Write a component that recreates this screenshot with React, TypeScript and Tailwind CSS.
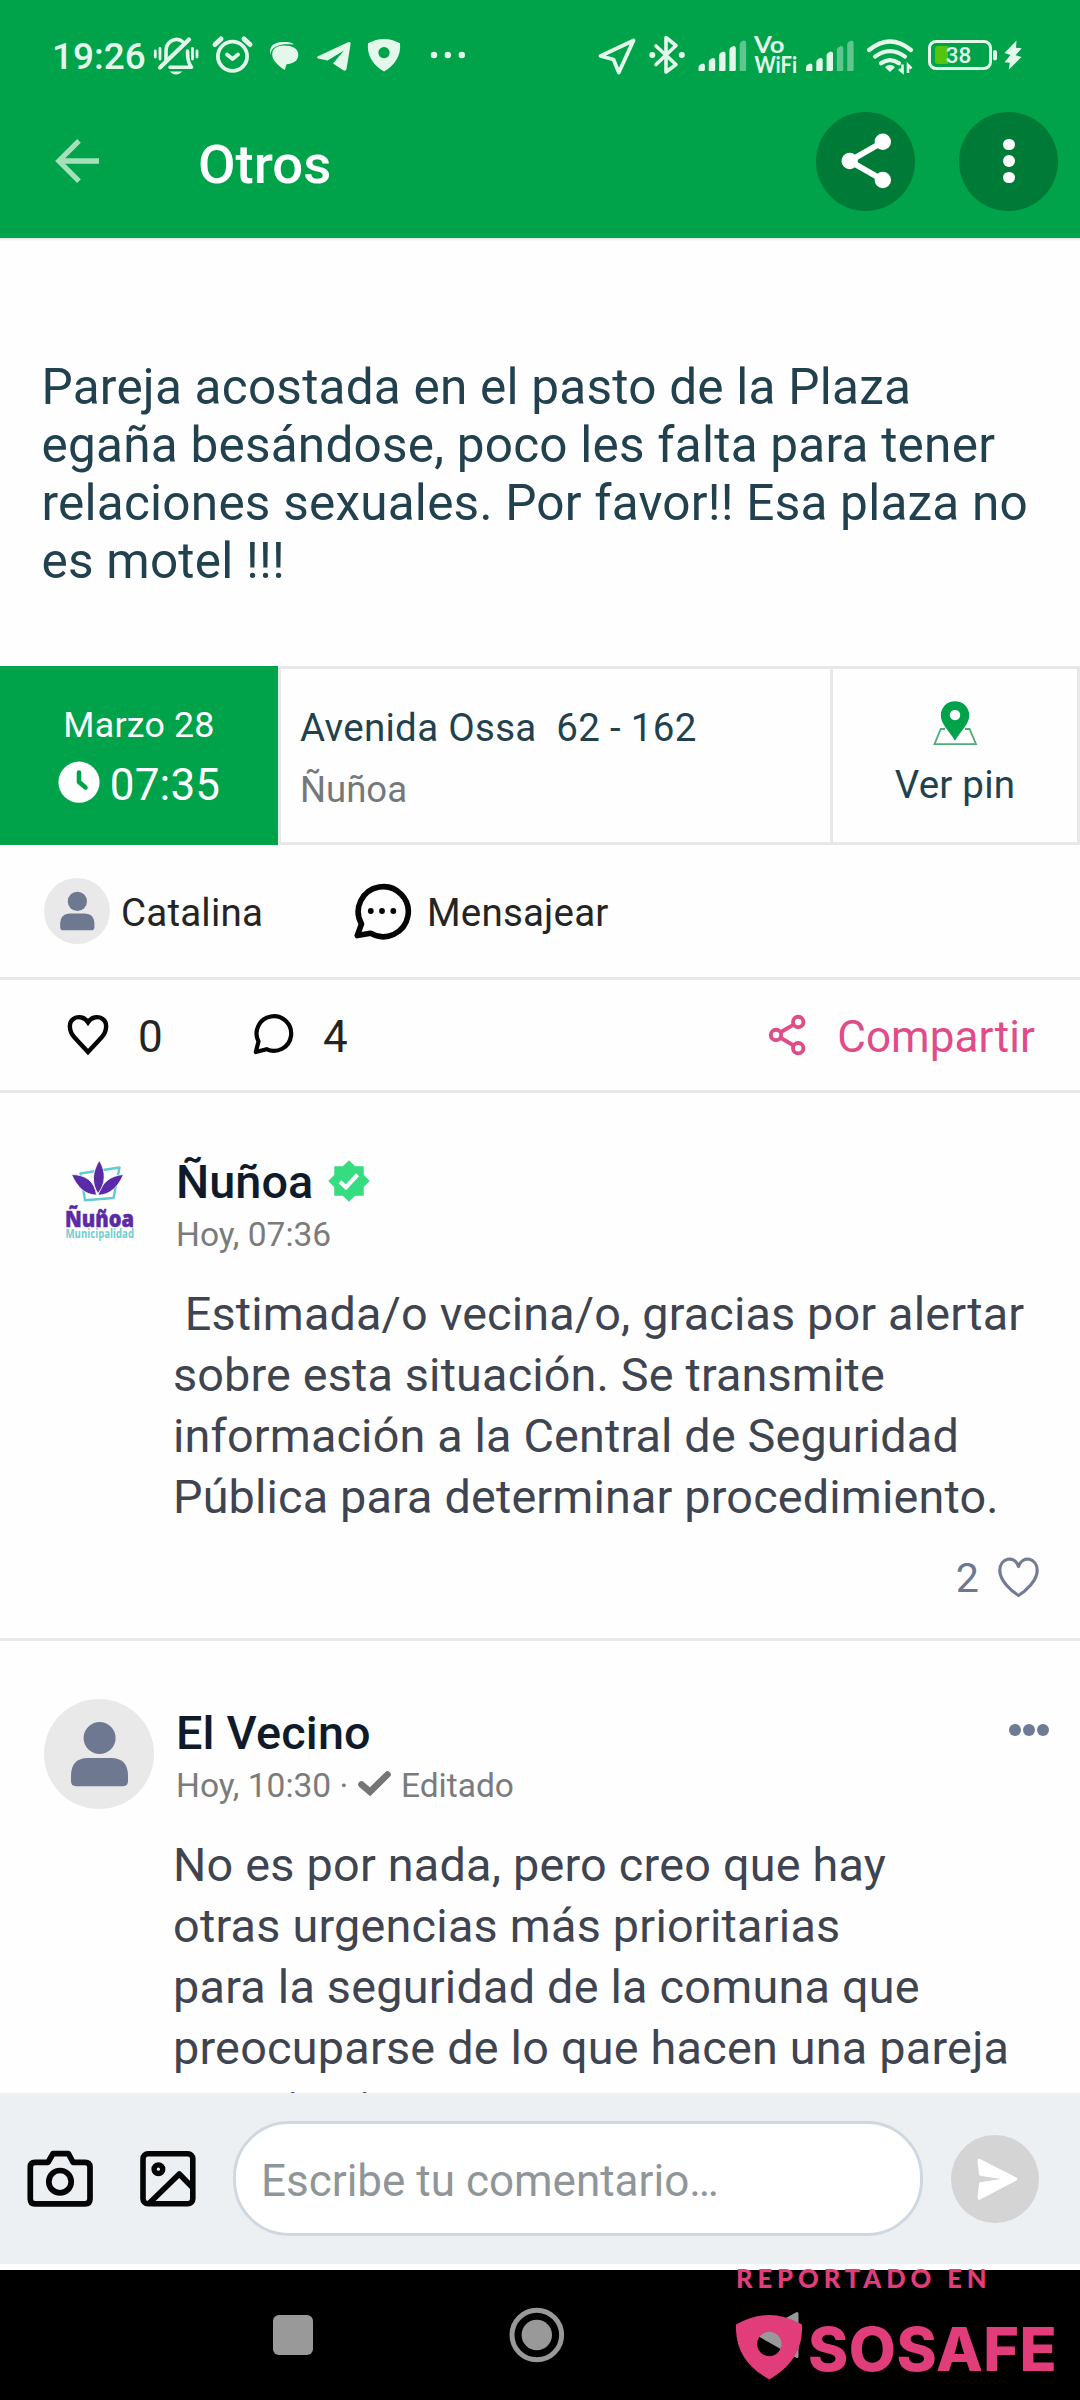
import React, { ReactNode } from "react";

/* Status-bar icons share one coordinate space: x across the bar, y from 30 to 80. */
function Glyph({ x, w, children }: { x: number; w: number; children: ReactNode }) {
  return (
    <svg className="shrink-0" width={w} height={50} viewBox={`${x} 30 ${w} 50`} fill="none">
      {children}
    </svg>
  );
}

const MINT = "#e3f8ea";

function Signal({ x, strong }: { x: number; strong: number }) {
  const tops = [63.5, 58, 51.5, 46, 40.5];
  return (
    <>
      {tops.map((top, i) => (
        <path
          key={i}
          d={`M${x + i * 10.3} 71 V${top + 4} Q${x + i * 10.3} ${top + 2} ${x + i * 10.3 + 2} ${top + 1} L${x + i * 10.3 + 4} ${top} Q${x + i * 10.3 + 6.4} ${top} ${x + i * 10.3 + 6.4} ${top + 2} V69.5 Q${x + i * 10.3 + 6.4} 71 ${x + i * 10.3 + 5} 71Z`}
          fill={MINT}
          opacity={i < strong ? 1 : 0.42}
        />
      ))}
    </>
  );
}

function StatusBar() {
  return (
    <div className="flex h-[100px] pt-[30px]">
      <div className="mt-[5px] ml-[52px] w-[100px] shrink-0 text-[36.9px] leading-[43px] font-medium text-[#e3f8ea]">19:26</div>
      <Glyph x={152} w={56}>
        <g stroke={MINT} strokeWidth="3.6" strokeLinecap="round" strokeLinejoin="round">
          <path d="M166 61 V51 A10.5 11.5 0 0 1 183 42" />
          <path d="M187.5 51 C187.5 60 188.5 63 191.5 67.2 H170" />
          <path d="M160 67.5 L189 39.5" strokeWidth="4.2" />
          <path d="M155.3 51 V57 M160 48.5 V59 M192.5 48.5 V59 M197 51 V57" strokeWidth="2.8" />
        </g>
        <path d="M169.5 71.5 H182.5 Q176 77.5 169.5 71.5Z" fill={MINT} />
      </Glyph>
      <Glyph x={208} w={54}>
        <g stroke={MINT} strokeLinecap="round" strokeLinejoin="round">
          <circle cx="232.5" cy="56.3" r="14.6" strokeWidth="3.8" />
          <path d="M227 54.5 L232.5 59 L238 54.5" strokeWidth="3.8" />
          <path d="M215 44.5 L221 39 M250 44.5 L244 39" strokeWidth="5" />
        </g>
      </Glyph>
      <Glyph x={262} w={46}>
        <path d="M270.5 55 C268 45 276 41.5 284 42 C289 42 292 42.6 294 44.6 C283 43.5 271 44.5 270.5 55Z" fill={MINT} />
        <path d="M284 45.6 C292 45.6 298.3 48.5 298.3 54.8 C298.3 60.5 293.5 63.8 286.5 64.3 L284.8 70 C280 67 272.2 61 272.2 54.5 C272.2 48.5 277 45.6 284 45.6Z" fill={MINT} />
      </Glyph>
      <Glyph x={308} w={52}>
        <path d="M317.5 56.5 L348 42.3 Q351 41.5 350.6 44 L346.5 69 Q345.8 71.5 343.3 70.3 L333 63.5 L344 50.5 L327.5 60.5 L318 58.5 Q316 57.7 317.5 56.5Z" fill={MINT} />
      </Glyph>
      <Glyph x={360} w={58}>
        <path fillRule="evenodd" d="M368 43.3 Q384 34.5 400 43.3 C401.5 56 394 66 384 71.5 C374 66 366.5 56 368 43.3Z M384 47 a5.6 5.6 0 1 0 0.01 0Z" fill={MINT} />
      </Glyph>
      <Glyph x={418} w={60}>
        <g fill={MINT}>
          <circle cx="434" cy="55" r="3.2" />
          <circle cx="447.8" cy="55" r="3.2" />
          <circle cx="461.8" cy="55" r="3.2" />
        </g>
      </Glyph>
      <div className="flex-1" />
      <Glyph x={590} w={52}>
        <path d="M600.5 56 L633.5 40.5 L618.8 72.5 L613.5 59.5Z" stroke={MINT} strokeWidth="3.8" strokeLinejoin="round" />
      </Glyph>
      <Glyph x={642} w={50}>
        <path d="M656 46 L676 64.5 L666 72 V37.5 L676 45.5 L656 64.5" stroke={MINT} strokeWidth="3.6" strokeLinejoin="round" strokeLinecap="round" />
        <circle cx="652.3" cy="55" r="3" fill={MINT} />
        <circle cx="681.8" cy="55" r="3" fill={MINT} />
      </Glyph>
      <Glyph x={692} w={58}>
        <Signal x={698.5} strong={4} />
      </Glyph>
      <Glyph x={750} w={50}>
        <g fill={MINT} fontFamily="Lato" fontWeight="700">
          <text x="754" y="52.5" fontSize="22.5" textLength="30.5" lengthAdjust="spacingAndGlyphs">Vo</text>
          <text x="754.5" y="73.3" fontSize="22" textLength="42.5" lengthAdjust="spacingAndGlyphs">WiFi</text>
        </g>
      </Glyph>
      <Glyph x={800} w={60}>
        <Signal x={806} strong={3} />
      </Glyph>
      <Glyph x={860} w={60}>
        <g stroke={MINT} strokeWidth="4.2" strokeLinecap="round">
          <path d="M869 50 Q890 33 911 50" />
          <path d="M875 56.6 Q890 45.5 905 56.6" />
          <path d="M881 63.2 Q890 57 899 63.2" />
        </g>
        <path d="M890 65 Q894 65 894.8 67.5 L890 72 L885.2 67.5 Q886 65 890 65Z" fill={MINT} />
        <path d="M902.500 64.500 V72 L899 69 M908 73 V65 L911.500 68.500" stroke={MINT} strokeWidth="2.600" />
      </Glyph>
      <Glyph x={920} w={80}>
        <rect x="929.500" y="41.500" width="61" height="27" rx="6.500" stroke={MINT} strokeWidth="3" />
        <path d="M938 46 H948 V64 H938 Q935 64 935 61 V49 Q935 46 938 46Z" fill="#55c40e" />
        <rect x="993" y="50" width="4" height="10.500" rx="2" fill={MINT} />
        <text x="945.800" y="63.300" fontSize="22.500" fontFamily="Roboto" fontWeight="500" fill={MINT}>38</text>
      </Glyph>
      <Glyph x={1000} w={80}>
        <path d="M1016.500 40.500 L1004.500 53 L1010.500 55 L1004.500 62.300 L1009.800 62.800 L1008.800 69.800 L1021.500 57 L1015.500 55.200 L1021.700 48.300 L1016 47.800Z" fill={MINT} />
      </Glyph>
    </div>
  );
}

function Toolbar() {
  return (
    <div className="flex h-[122px] items-center pr-[22px] pl-[52px]">
      <svg width={50} height={50} viewBox="52 136 50 50" fill="none" stroke="#a5e0ba">
        <path d="M99 161 H60" strokeWidth="5.600" />
        <path d="M79 140.800 L58.800 161 L79 181.200" strokeWidth="5.200" />
      </svg>
      <h1 className="ml-[96px] flex-1 pt-[5px] text-[54.500px] leading-[64px] font-medium text-white">Otros</h1>
      <div className="flex size-[99px] items-center justify-center rounded-full bg-[#007a37]">
        <svg width={60} height={60} viewBox="835.500 131 60 60" fill="#fff" stroke="#fff">
          <path d="M882.300 142 L849.200 161 L882.300 180" fill="none" strokeWidth="6" />
          <g stroke="none">
            <circle cx="849.200" cy="161" r="8.200" />
            <circle cx="882.300" cy="141.800" r="8.200" />
            <circle cx="882.300" cy="180" r="8.200" />
          </g>
        </svg>
      </div>
      <div className="ml-[44px] flex size-[99px] flex-col items-center justify-center gap-[5.400px] rounded-full bg-[#007a37] pl-[1px]">
        <span className="size-[11.300px] rounded-full bg-white" />
        <span className="size-[11.300px] rounded-full bg-white" />
        <span className="size-[11.300px] rounded-full bg-white" />
      </div>
    </div>
  );
}

function Person({ size }: { size: number }) {
  return (
    <svg className="shrink-0" width={size} height={size} viewBox="0 0 110 110">
      <circle cx="55" cy="55" r="55" fill="#e9e9ea" />
      <circle cx="55.600" cy="39" r="16" fill="#6f7891" />
      <path d="M44 59 H67 Q84 59 84 77 V82 Q84 87.200 79 87.200 H32 Q27 87.200 27 82 V77 Q27 59 44 59Z" fill="#6f7891" />
    </svg>
  );
}

function MetaRow() {
  return (
    <div className="mt-[76px] flex h-[179px] shrink-0">
      <div className="flex w-[278px] flex-col items-center bg-[#00a34a] pt-[38px] text-white">
        <div className="text-[35.750px] leading-[42px] tracking-[0.200px]">Marzo 28</div>
        <div className="mt-[13px] flex gap-[10px]">
          <svg className="mt-[2px]" width={42} height={42} viewBox="0 0 42 42" fill="none">
            <circle cx="21" cy="21.200" r="20.600" fill="#fff" />
            <path d="M21 11.500 V21 L27.500 26.500" stroke="#00a34a" strokeWidth="4.600" strokeLinecap="round" strokeLinejoin="round" />
          </svg>
          <div className="text-[44px] leading-[52px] tracking-[0.200px]">07:35</div>
        </div>
      </div>
      <div className="w-[555px] border-[3px] border-[#e8e8e9] pt-[36px] pl-[19px]">
        <div className="text-[38.500px] leading-[46px] tracking-[0.300px] whitespace-pre text-[#22414f]">{"Avenida Ossa\u00a0 62 - 162"}</div>
        <div className="mt-[17px] text-[36.500px] leading-[43px] text-[#75787a]">Ñuñoa</div>
      </div>
      <div className="flex flex-1 flex-col items-center border-y-[3px] border-r-[3px] border-[#e8e8e9] pt-[31px]">
        <svg width={48} height={46} viewBox="931 700 48 46" fill="none">
          <path d="M945 729 H940.800 L934.500 744.200 H976 L969.600 729 H965" stroke="#4fae78" strokeWidth="1.800" />
          <path fillRule="evenodd" d="M955 701.300 C963 701.300 969.300 707.500 969.300 715.300 C969.300 724 961 730.500 955 740.800 C949 730.500 940.800 724 940.800 715.300 C940.800 707.500 947 701.300 955 701.300Z M955 709.900 a5.200 5.200 0 1 0 0.010 0Z" fill="#00a34a" />
        </svg>
        <div className="mt-[16px] text-[38.500px] leading-[46px] tracking-[0.200px] text-[#22414f]">Ver pin</div>
      </div>
    </div>
  );
}

function AuthorRow() {
  return (
    <div className="flex h-[135px] shrink-0 items-center border-b-[3px] border-[#e8e8e9] pl-[44px] text-[38.500px] leading-[46px] tracking-[0.200px] text-[#242424]">
      <Person size={66} />
      <div className="ml-[11px] w-[228px] pt-[4px]">Catalina</div>
      <svg width={64} height={60} viewBox="350 881 64 60" fill="none">
        <path d="M362.500 924 A25 25 0 1 1 371.500 933.200 L358.200 935.600Z" stroke="#050505" strokeWidth="5.600" strokeLinejoin="round" />
        <circle cx="371.800" cy="911" r="2.900" fill="#050505" />
        <circle cx="383" cy="911" r="2.900" fill="#050505" />
        <circle cx="394.300" cy="911" r="2.900" fill="#050505" />
      </svg>
      <div className="ml-[14px] pt-[4px]">Mensajear</div>
    </div>
  );
}

function StatsRow() {
  return (
    <div className="flex h-[113px] shrink-0 items-center border-b-[3px] border-[#e8e8e9] pr-[45px] pl-[64px] text-[44px] leading-[52px] text-[#242424]">
      <svg width={48} height={48} viewBox="64 1011 48 48" fill="none">
        <path d="M88 1052 L74.500 1037.500 C68.500 1031 68.500 1022 73.500 1018.800 C78.500 1015.500 85 1017.500 88 1022.200 C91 1017.500 97.500 1015.500 102.500 1018.800 C107.500 1022 107.500 1031 101.500 1037.500Z" stroke="#050505" strokeWidth="4.400" />
      </svg>
      <div className="ml-[26px] w-[110px] pt-[4px]">0</div>
      <svg width={48} height={48} viewBox="248 1011 48 48" fill="none">
        <path d="M258.500 1041.500 A17.300 17.300 0 1 1 266.500 1049.200 L255.800 1052Z" stroke="#050505" strokeWidth="4.200" strokeLinejoin="round" />
      </svg>
      <div className="ml-[27px] pt-[4px]">4</div>
      <div className="ml-auto flex items-center text-[#e04c88]">
        <svg width={44} height={46} viewBox="765 1012 44 46" fill="none" stroke="#e04c88" strokeWidth="3.900">
          <circle cx="776" cy="1035" r="5.200" />
          <circle cx="798.200" cy="1022" r="5.200" />
          <circle cx="798.200" cy="1048.200" r="5.200" />
          <path d="M780.500 1032.300 L793.700 1024.600 M780.500 1037.700 L793.700 1045.500" />
        </svg>
        <div className="ml-[28px] pt-[4px] tracking-[0.100px]">Compartir</div>
      </div>
    </div>
  );
}

function NunoaLogo() {
  return (
    <svg className="shrink-0" width={110} height={110} viewBox="44 1150 110 110" fill="none">
      <path d="M80.500 1173.500 L119.500 1167.500 L113.500 1198 L85 1200.200Z" stroke="#62cbd0" strokeWidth="2.400" strokeLinejoin="round" />
      <g fill="#5b2aa6" stroke="#fff" strokeWidth="0.800">
        <path d="M71.500 1174.500 C85 1174.500 95 1181 96.500 1195.200 C84 1194.500 77.500 1187 71.500 1174.500Z" />
        <path d="M123.500 1174.500 C110 1175.500 101.500 1183 98 1195.200 C110 1195 118 1187 123.500 1174.500Z" />
        <path d="M99.300 1160.500 C106.500 1172 105.500 1184 98 1193.500 C91.500 1184 92 1172 99.300 1160.500Z" />
      </g>
      <text x="65" y="1226.500" fontFamily="Open Sans" fontWeight="800" fontSize="23.500" fill="#5b2aa6" stroke="#5b2aa6" strokeWidth="0.500" textLength="69" lengthAdjust="spacingAndGlyphs">Ñuñoa</text>
      <text x="65.500" y="1238" fontFamily="Open Sans" fontWeight="700" fontSize="11.500" fill="#6fcfd0" textLength="68.500" lengthAdjust="spacingAndGlyphs">Municipalidad</text>
    </svg>
  );
}

function Verified() {
  const pts = Array.from({ length: 16 }, (_, i) => {
    const r = i % 2 === 0 ? 20.8 : 16;
    const a = (i * Math.PI) / 8;
    return `${(21 + r * Math.sin(a)).toFixed(2)},${(21 - r * Math.cos(a)).toFixed(2)}`;
  }).join(" ");
  return (
    <svg width={42} height={42} viewBox="0 0 42 42" fill="none">
      <polygon points={pts} fill="#36dd80" />
      <path d="M12 21.800 L18 27.200 L29.500 14.800" stroke="#fff" strokeWidth="4.200" />
    </svg>
  );
}

function Comments() {
  return (
    <>
      <article className="flex h-[548px] shrink-0 border-b-[3px] border-[#e8e8e9] pt-[57px] pl-[44px]">
        <NunoaLogo />
        <div className="ml-[22px] flex-1 pt-[5px]">
          <div className="flex">
            <h2 className="w-[152px] text-[46.750px] leading-[55px] font-medium tracking-[0.100px] text-[#0f1b2b]">Ñuñoa</h2>
            <div className="pt-[5px]"><Verified /></div>
          </div>
          <div className="mt-[5px] text-[33.500px] leading-[40px] text-[#7b7b7b]">Hoy, 07:36</div>
          <p className="mt-[29px] -ml-[3px] text-[46.750px] leading-[61px] tracking-[0.160px] whitespace-pre text-[#3e4450]">
            {"\u00a0Estimada/o vecina/o, gracias por alertar\nsobre esta situación. Se transmite\ninformación a la Central de Seguridad\nPública para determinar procedimiento."}
          </p>
          <div className="mt-[26px] flex justify-end pr-[39px] text-[#6d7890]">
            <span className="text-[41.250px] leading-[48px]">2</span>
            <svg className="ml-[16px]" width={46} height={46} viewBox="995 1553 46 46" fill="none">
              <path d="M1018.500 1594.500 C1011 1590 999.800 1579.500 999.800 1569.500 C999.800 1557 1014.500 1553.500 1018.500 1565.500 C1022.500 1553.500 1037.200 1557 1037.200 1569.500 C1037.200 1579.500 1026 1590 1018.500 1594.500Z" stroke="#747b92" strokeWidth="3.200" strokeLinejoin="round" />
            </svg>
          </div>
        </div>
      </article>
      <article className="flex h-[452px] shrink-0 overflow-hidden pt-[58px] pl-[44px]">
        <Person size={110} />
        <div className="ml-[22px] flex-1 pt-[7px]">
          <div className="flex justify-between pr-[31px]">
            <h2 className="text-[46.750px] leading-[55px] font-medium tracking-[0.200px] text-[#0f1b2b]">El Vecino</h2>
            <div className="flex gap-[2.400px] pt-[18px]">
              <span className="size-[11.600px] rounded-full bg-[#6f7a94]" />
              <span className="size-[11.600px] rounded-full bg-[#6f7a94]" />
              <span className="size-[11.600px] rounded-full bg-[#6f7a94]" />
            </div>
          </div>
          <div className="mt-[5px] flex text-[33.500px] leading-[40px] text-[#7b7b7b]">
            <span className="w-[181.500px] whitespace-nowrap">Hoy, 10:30 ·</span>
            <svg width={43.500} height={40} viewBox="357 1766 43.500 40" fill="none">
              <path d="M360.500 1784.500 L369 1791.800 L386.500 1774.500" stroke="#757575" strokeWidth="6.600" strokeLinecap="round" />
            </svg>
            <span>Editado</span>
          </div>
          <p className="mt-[29px] -ml-[3px] text-[46.750px] leading-[61px] tracking-[0.230px] whitespace-pre text-[#3e4450]">
            {"No es por nada, pero creo que hay\notras urgencias más prioritarias\npara la seguridad de la comuna que\npreocuparse de lo que hacen una pareja\nque si existen"}
          </p>
        </div>
      </article>
    </>
  );
}

function Composer() {
  return (
    <div className="flex h-[171px] shrink-0 items-center bg-[#ecf0f3] pl-[24px]">
      <svg width={72} height={64} viewBox="24 2146.500 72 64" fill="none" stroke="#050505" strokeWidth="5.700" strokeLinejoin="round">
        <path d="M35 2161.800 H48 L53 2153.200 H68.500 L73 2161.800 H85 Q90 2161.800 90 2166.500 V2198.500 Q90 2203.300 85 2203.300 H35 Q30.300 2203.300 30.300 2198.500 V2166.500 Q30.300 2161.800 35 2161.800Z" />
        <circle cx="60" cy="2181.200" r="11.200" />
      </svg>
      <svg className="ml-[40px]" width={64} height={64} viewBox="136 2146.500 64 64" fill="none" stroke="#050505" strokeWidth="5.600" strokeLinejoin="round">
        <rect x="143" y="2153.300" width="49.800" height="50" rx="5" />
        <circle cx="158.400" cy="2168.700" r="4.300" strokeWidth="5.400" />
        <path d="M149 2203 L179.300 2173.500 L192.500 2187" />
      </svg>
      <div className="ml-[33px] flex h-[115px] w-[690px] items-center rounded-[56px] border-[3px] border-[#cfd8e0] bg-white pt-[5px] pl-[25px] text-[44px] leading-[52px] text-[#8f9699]">
        Escribe tu comentario…
      </div>
      <div className="ml-[28px] flex size-[88px] items-center justify-center rounded-full bg-[#d4d4d4]">
        <svg width={88} height={88} viewBox="951 2134.500 88 88">
          <path d="M979.300 2160 L1015.500 2178.500 L979.300 2197.500 L980.800 2183.500 L1001 2179.500 V2177.500 L980.800 2173.500Z" fill="#fff" stroke="#fff" strokeWidth="3.600" strokeLinejoin="round" />
          <path d="M978 2175.300 L1001.500 2178.500 L978 2181.700Z" fill="#d4d4d4" />
        </svg>
      </div>
    </div>
  );
}

function NavBar() {
  return (
    <div className="relative mt-[6px] flex h-[130px] shrink-0 items-center bg-black pl-[273px]">
      <span className="size-[40px] rounded-[6px] bg-[#999999]" />
      <svg className="ml-[196px]" width={56} height={56} viewBox="0 0 56 56" fill="none">
        <circle cx="27.800" cy="28" r="24.800" stroke="#999" strokeWidth="5" />
        <circle cx="27.800" cy="28" r="15.200" fill="#999" />
      </svg>
      <svg className="ml-[190px]" width={45} height={50} viewBox="755 2310 45 50">
        <path d="M759 2335 L797 2313.500 V2356.500Z" fill="#999" stroke="#999" strokeWidth="3" strokeLinejoin="round" />
      </svg>
      <div className="absolute -top-[8px] left-[736px] text-[#e23d7b]">
        <div className="font-[Lato] text-[25.600px] leading-[32px] font-black tracking-[4.900px] whitespace-nowrap">REPORTADO EN</div>
        <div className="mt-[16px] flex">
          <svg width={67} height={76} viewBox="736 2310 67 76" fill="currentColor">
            <path fillRule="evenodd" d="M736 2324.500 Q769 2305.500 802 2324.500 C803 2350 791 2367 769.300 2379.500 C747 2367 735 2350 736 2324.500Z M769.300 2331.800 a12.200 12.200 0 1 0 0.010 0Z" />
          </svg>
          <div className="mt-[2px] ml-[5px] font-[Inter] text-[61px] leading-[74px] font-extrabold tracking-[0.500px]">SOSAFE</div>
        </div>
      </div>
    </div>
  );
}

export default function App() {
  return (
    <div className="flex h-[2400px] w-[1080px] flex-col overflow-hidden bg-[#fefefe] font-[Roboto,sans-serif]">
      <header className="h-[238px] shrink-0 bg-[#00a34a]">
        <StatusBar />
        <Toolbar />
      </header>
      <div className="h-[3px] shrink-0 bg-gradient-to-b from-[#d9e6de] to-[#fefefe]" />
      <p className="mt-[117px] ml-[41.500px] shrink-0 text-[49.500px] leading-[58px] tracking-[0.230px] whitespace-pre text-[#22414f]">
        {"Pareja acostada en el pasto de la Plaza\negaña besándose, poco les falta para tener\nrelaciones sexuales. Por favor!! Esa plaza no\nes motel !!!"}
      </p>
      <MetaRow />
      <AuthorRow />
      <StatsRow />
      <Comments />
      <Composer />
      <NavBar />
    </div>
  );
}
